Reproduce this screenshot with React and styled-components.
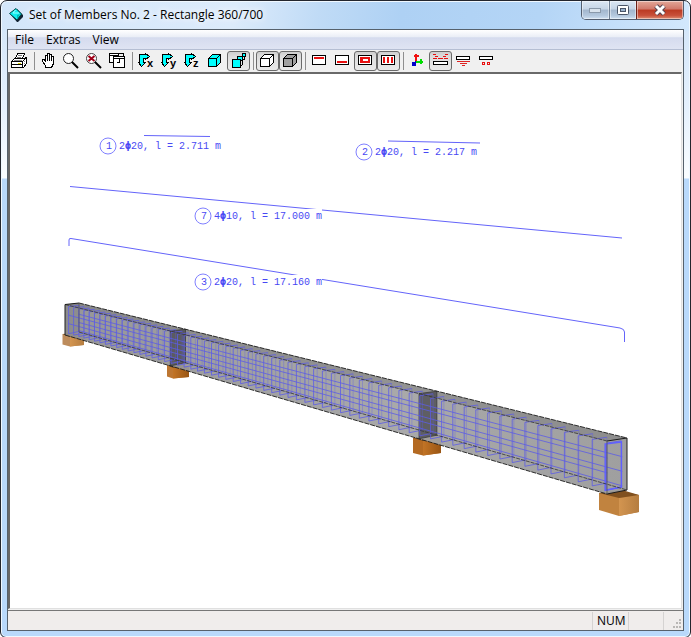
import React from 'react'
import styled, { createGlobalStyle } from 'styled-components'

const GlobalStyle = createGlobalStyle`
* { box-sizing: border-box; }
body {
  margin: 0;
  background: #fff;
}
button { font: inherit; color: inherit; }
`

const Window = styled.div`
  min-height: 100vh;
  display: flex;
  flex-direction: column;
  padding: 0 6px 6px;
  border: 1px solid #23262e;
  border-radius: 7px 7px 6px 6px;
  box-shadow: inset 0 0 0 1px #f0f8ff;
  background:
    linear-gradient(100deg, #d3e6fa 0, #dcebfb 34%, #c0dbf6 46%, #aed1f4 58%, #b4d5f6 78%, #d3e8fc 100%) 0 0 / 100% 30px no-repeat,
    linear-gradient(#cfe3f8 0, #e6f1fd 110px, #fafdff 177px, #b9d9fb 178px, #b9d9fb 100%);
  font-family: "Open Sans", "Noto Sans", sans-serif;
  font-size: 12px;
  color: #000;
`
const TitleBar = styled.header`
  height: 28px;
  display: flex;
  align-items: center;
  gap: 6px;
  padding-left: 2px;
`
const Title = styled.h1`
  flex: 1;
  margin: 0;
  font-size: 12px;
  line-height: 16px;
  font-weight: 400;
  white-space: nowrap;
  text-shadow: 0 0 6px #fff, 0 0 10px #fff;
`
const Caption = styled.div`
  align-self: flex-start;
  display: flex;
  height: 19px;
  border: 1px solid #535e6f;
  border-top: 0;
  border-radius: 0 0 5px 5px;
  overflow: hidden;
`
const CaptionButton = styled.button`
  width: ${(p) => (p.$close ? 47 : 27)}px;
  padding: 0;
  border: 0;
  border-left: ${(p) => (p.$first ? '0' : p.$close ? '1px solid #6b2018' : '1px solid #6f7f93')};
  display: flex;
  align-items: center;
  justify-content: center;
  box-shadow: inset 0 0 0 1px rgba(255, 255, 255, 0.45);
  background: ${(p) =>
    p.$close
      ? 'linear-gradient(#e3a899 0, #d1786a 45%, #bb3a22 50%, #c8503a 80%, #df8f74 100%)'
      : 'linear-gradient(#dbe7f4 0, #c6d5e6 45%, #a2b6cd 50%, #b3c7dd 80%, #cfe0f2 100%)'};
`
const Client = styled.div`
  flex: 1;
  display: flex;
  flex-direction: column;
  border: 1px solid #56616c;
  background: #f0f0f0;
`
const MenuBar = styled.nav`
  height: 20px;
  flex: none;
  display: flex;
  align-items: center;
  padding-left: 1px;
  border-bottom: 1px solid #b5bed3;
  background: linear-gradient(#fff 0, #e9edf6 38%, #d5dbee 40%, #dfe4f3 100%);
`
const MenuItem = styled.button`
  padding: 0 6px;
  border: 0;
  background: none;
  line-height: 18px;
`
const ToolBar = styled.div`
  height: 22px;
  flex: none;
  display: flex;
  align-items: center;
  padding-bottom: 1px;
  background: #f0f0f0;
`
const ToolButton = styled.button`
  width: 23px;
  height: 20px;
  flex: none;
  padding: 0;
  border: 1px solid ${(p) => (p.$pressed ? '#6a6a6a' : 'transparent')};
  border-radius: 3px;
  background: ${(p) => (p.$pressed ? 'linear-gradient(#cfcfcf 0, #dedede 30%, #e9e9e9 100%)' : 'none')};
  svg { display: block; }
`
const Separator = styled.span`
  width: 6px;
  height: 18px;
  flex: none;
  display: flex;
  justify-content: center;
  &::before {
    content: '';
    width: 1px;
    background: #8e8e8e;
  }
`
const Canvas = styled.main`
  flex: 1;
  display: flex;
  border-style: solid;
  border-width: 2px 1px 1px 2px;
  border-color: #696969 #e0e0e0 #e0e0e0 #696969;
  margin-right: 1px;
  background: #fff;
`
const Drawing = styled.svg`
  flex: 1;
  width: 100%;
  min-width: 0;
  font-family: "Liberation Mono", "DejaVu Sans Mono", monospace;
  font-size: 10px;
`
const StatusBar = styled.footer`
  height: 20px;
  flex: none;
  display: flex;
  margin-top: 1px;
  border-top: 1px solid #777;
  background: #f0edec;
  padding-top: 1px;
`
const Field = styled.span`
  width: ${(p) => p.$width}px;
  padding-left: 4px;
  border-left: 1px solid #d5d3d2;
  line-height: 17px;
`
const Hint = styled.span`
  flex: 1;
`
const Grip = styled.svg`
  align-self: flex-end;
  flex: none;
`

function Icon({ children }) {
  return (
    <svg width="21" height="18" viewBox="0 0 21 18" shapeRendering="crispEdges" aria-hidden="true">
      {children}
    </svg>
  )
}

const AxisView = ({ axis }) => (
  <Icon>
    <path d="M3.500 2.500h6v-1l4 3-4 3v-1h-2v4h2l-4 4-3-4h1z" fill="#0ff" stroke="#000" />
    <text x="11" y="15" fontFamily="Liberation Sans, sans-serif" fontSize="11" fontWeight="700">{axis}</text>
  </Icon>
)

const Cube = ({ fill, edge = 12 }) => (
  <Icon>
    <path d={`M3.500 6.500l4-4h${edge - 4}v8l-4 4h-${edge - 4}z`} fill={fill} stroke="#000" />
    <path d={`M3.500 6.500h${edge - 4}v8M${edge - 0.5} 6.500l4-4`} fill="none" stroke="#000" />
  </Icon>
)

const Frame = ({ children }) => (
  <Icon>
    <rect x="3.500" y="3.500" width="13" height="9" fill="#fff" stroke="#000" />
    {children}
  </Icon>
)

const icons = {
  print: (
    <Icon>
      <path d="M6.500 6.500l2-5h7l-2 5z" fill="#fff" stroke="#000" />
      <path d="M9 3.500h4M8 5.500h4" stroke="#777" />
      <path d="M2.500 9.500l3-3h9l3-1v6l-3 4h-12z" fill="#fff" stroke="#000" />
      <path d="M2.500 9.500h11l4-4M13.500 9.500v5M2 12.500h12" fill="none" stroke="#000" />
      <path d="M9 11h3" stroke="#e0d800" strokeWidth="1" />
      <path d="M15 9.500h1M15 11.500h1M5 8.500h8" stroke="#888" />
    </Icon>
  ),
  pan: (
    <Icon>
      <path d="M7.500 15.500v-2l-3-4v-2h2l1 2v-6h2v-2h2v1h2v2h2v7l-2 4z" fill="#fff" stroke="#000" />
      <path d="M9.500 3v6M11.500 3v6M13.500 4v5" stroke="#000" />
    </Icon>
  ),
  zoom: (
    <Icon>
      <g shapeRendering="auto">
        <circle cx="7.500" cy="6.500" r="5" fill="#fff" stroke="#222" />
        <path d="M11 10l6 6" stroke="#000" strokeWidth="2" />
      </g>
    </Icon>
  ),
  zoomOff: (
    <Icon>
      <g shapeRendering="auto">
        <circle cx="7.500" cy="6.500" r="5" fill="#fff" stroke="#444" />
        <path d="M11 10l6 6" stroke="#000" strokeWidth="2" />
        <path d="M4.500 4l6 5M10.500 4l-6 5" stroke="#a00018" strokeWidth="2" />
      </g>
    </Icon>
  ),
  windows: (
    <Icon>
      <rect x="2.500" y="1.500" width="9" height="9" fill="#fff" stroke="#000" />
      <rect x="6.500" y="4.500" width="11" height="11" fill="#fff" stroke="#000" />
      <path d="M2 3.500h9M6 6.500h11M11.500 1.500h5v3M9.500 10.500h3v-4" fill="none" stroke="#000" />
    </Icon>
  ),
  x: <AxisView axis="x" />,
  y: <AxisView axis="y" />,
  z: <AxisView axis="z" />,
  iso: <Cube fill="#0ff" />,
  members: (
    <Icon>
      <rect x="14.500" y="1.500" width="3" height="3" fill="#0ff" stroke="#000" />
      <path d="M9.500 7v-2.500h5v4h-2" fill="#0ff" stroke="#000" />
      <path d="M14 7.500h2v-3" fill="none" stroke="#000" />
      <path d="M4.500 7.500h8v8h-8z" fill="#0ff" stroke="#000" />
      <path d="M12.500 15l2-3v-4" fill="none" stroke="#000" />
    </Icon>
  ),
  wire: <Cube fill="#fff" edge={13} />,
  solid: <Cube fill="#a0a0a0" edge={13} />,
  top: <Frame><path d="M5 6h10" stroke="#e81010" strokeWidth="2" /></Frame>,
  bottom: <Frame><path d="M5 10h10" stroke="#e81010" strokeWidth="2" /></Frame>,
  link: <Frame><path d="M5 5h10v6H5zM8 7v2h5V7z" fill="#e81010" fillRule="evenodd" /></Frame>,
  bars: <Frame><path d="M6 5v6M10 5v6M14 5v6" stroke="#e81010" strokeWidth="2" /></Frame>,
  axes: (
    <Icon>
      <path d="M9 2v8M7 4h5" stroke="#f01010" strokeWidth="2" />
      <path d="M9 9.500h7M14 7v5" stroke="#0d0" strokeWidth="2" />
      <path d="M8.500 9v2h-2M5 10h3v3h-3z" stroke="#00c" fill="#00c" />
    </Icon>
  ),
  loadTop: (
    <Icon>
      <rect x="3.500" y="9.500" width="14" height="3" fill="#fff" stroke="#000" />
      <path d="M3 2.500h3M15 2.500h3M5 4.500h3M13 4.500h3M3 6.500h4M8 6.500h5M14 6.500h4" stroke="#e81010" />
    </Icon>
  ),
  loadBottom: (
    <Icon>
      <rect x="3.500" y="4.500" width="13" height="3" fill="#fff" stroke="#000" />
      <path d="M4 9.500h13M7 11.500h7M9 13.500h3" stroke="#d22" />
    </Icon>
  ),
  dimensions: (
    <Icon>
      <rect x="3.500" y="4.500" width="13" height="3" fill="#fff" stroke="#000" />
      <rect x="6.500" y="10.500" width="2" height="2" fill="none" stroke="#e81010" />
      <rect x="11.500" y="10.500" width="2" height="2" fill="none" stroke="#e81010" />
    </Icon>
  ),
}

// null is a separator
const tools = [
  ['print', 'Print'],
  null,
  ['pan', 'Pan'], ['zoom', 'Zoom'], ['zoomOff', 'Reset zoom'], ['windows', 'Windows'],
  null,
  ['x', 'View in X'], ['y', 'View in Y'], ['z', 'View in Z'], ['iso', 'Isometric view'], ['members', 'Perspective', true],
  null,
  ['wire', 'Wireframe', true], ['solid', 'Solid', true],
  null,
  ['top', 'Top reinforcement'], ['bottom', 'Bottom reinforcement'], ['link', 'Stirrups', true], ['bars', 'All bars', true],
  null,
  ['axes', 'Axes'], ['loadTop', 'Labels', true], ['loadBottom', 'Supports'], ['dimensions', 'Sections'],
]

// Beam in perspective: t runs along the length, u from front to back, v from top to bottom
const RATIO = 1.71
const LINKS = 63

function project(t, u, v) {
  const s = t / (RATIO - (RATIO - 1) * t)
  const x = 65 + 542 * s + u * (14 + 6 * s)
  const top = 304.5 + 136.5 * s - u * (1.5 + 1.5 * s)
  const bottom = 335 + 159 * s - u * (3 + s)
  return [x, top + (bottom - top) * v]
}

function poly(...points) {
  return 'M' + points.map(([t, u, v]) => project(t, u, v).map((n) => n.toFixed(1)).join(' ')).join('L')
}

const face = (t) => poly([t, 0, 0], [t, 1, 0], [t, 1, 1], [t, 0, 1]) + 'z'
const rebar = (u, v) => poly([0.004, u, v], [0.998, u, v])

function Support({ points, ridge, top, light, dark }) {
  return (
    <g>
      <polygon points={points} fill={light} />
      <polygon points={ridge} fill={dark} />
      <polygon points={top} fill="#80501f" />
    </g>
  )
}

function Beam() {
  const links = Array.from({ length: LINKS + 1 }, (_, i) => 0.006 + (0.991 * i) / LINKS)
  return (
    <g>
      <path d={poly([0, 0, 0], [0, 1, 0], [1, 1, 0], [1, 1, 1], [1, 0, 1], [0, 0, 1]) + 'z'} fill="url(#side)" fillOpacity="0.94" />
      <path d={poly([0, 0, 0], [0, 1, 0], [1, 1, 0], [1, 0, 0]) + 'z'} fill="#777" fillOpacity="0.45" />
      <path d={face(0)} fill="#555" fillOpacity="0.15" />
      <path d={face(0.292)} fill="#45454c" fillOpacity="0.75" stroke="#333" strokeWidth="0.7" />
      <path d={face(0.763)} fill="#45454c" fillOpacity="0.75" stroke="#333" strokeWidth="0.7" />
      <g fill="none" stroke="#5c5ce6" strokeWidth="0.8">
        {links.map((t) => (
          <path key={t} d={poly([t, 0.86, 0.95], [t, 0.12, 0.95], [t, 0.12, 0.06], [t, 0.86, 0.06])} />
        ))}
        <g strokeOpacity="0.45">
          {links.map((t) => (
            <path key={t} d={poly([t, 0.86, 0.06], [t, 0.86, 0.95])} />
          ))}
        </g>
        <path d={[rebar(0.12, 0.34), rebar(0.12, 0.62), rebar(0.86, 0.36), rebar(0.86, 0.64), rebar(0.86, 0.92)].join('')} />
      </g>
      <path d={poly([0.997, 0.05, 0.07], [0.997, 0.86, 0.08], [0.997, 0.86, 0.95], [0.997, 0.05, 0.95]) + 'z'} fill="none" stroke="#6060ff" strokeWidth="1.500" />
      <path
        d={poly([0, 0, 0], [1, 0, 0]) + poly([0, 1, 1], [1, 1, 1])}
        fill="none" stroke="#333" strokeWidth="0.8" strokeDasharray="4 1"
      />
      <path
        d={poly([0, 1, 0], [1, 1, 0]) + poly([0, 0, 1], [1, 0, 1])}
        fill="none" stroke="#1c1c1c" strokeWidth="0.9" strokeDasharray="5 1"
      />
      <path d={poly([0, 0, 1], [0, 0, 0], [0, 1, 0]) + poly([1, 0, 0], [1, 1, 0], [1, 1, 1], [1, 0, 1])} fill="none" stroke="#1c1c1c" />
      <path d={poly([0, 1, 0], [0, 1, 1]) + poly([1, 0, 0], [1, 0, 1])} stroke="#555" strokeWidth="0.8" />
    </g>
  )
}

const labels = [
  { no: 1, x: 108, y: 146, bars: '2', text: '20, l = 2.711 m' },
  { no: 2, x: 364, y: 152, bars: '2', text: '20, l = 2.217 m' },
  { no: 7, x: 203, y: 216, bars: '4', text: '10, l = 17.000 m' },
  { no: 3, x: 203, y: 282, bars: '2', text: '20, l = 17.160 m' },
]

function BarLabel({ no, x, y, bars, text }) {
  return (
    <g>
      <rect x={x - 9} y={y - 7} width={text.length * 6 + 32} height="14" fill="#fff" />
      <circle cx={x} cy={y} r="8" fill="#fff" stroke="#8080ff" />
      <g fill="#4848f4">
        <text x={x - 2} y={y + 3}>{no}</text>
        <text x={x + 11} y={y + 3}>
          {bars}<tspan fontFamily="DejaVu Sans Mono, monospace" fontWeight="700">ϕ</tspan>{text}
        </text>
      </g>
    </g>
  )
}

function Model() {
  return (
    <Drawing viewBox="10 74 671 534" role="img" aria-label="Reinforcement model">
      <defs>
        <linearGradient id="side" x1="0" y1="0" x2="1" y2="0">
          <stop offset="0" stopColor="#909090" />
          <stop offset="0.6" stopColor="#a4a4a4" />
          <stop offset="1" stopColor="#999" />
        </linearGradient>
        <linearGradient id="wood" x1="0" y1="0" x2="1" y2="0">
          <stop offset="0" stopColor="#c27426" />
          <stop offset="1" stopColor="#995513" />
        </linearGradient>
        <linearGradient id="woodLight" x1="0" y1="0" x2="1" y2="0">
          <stop offset="0" stopColor="#d39550" />
          <stop offset="1" stopColor="#b57d40" />
        </linearGradient>
      </defs>
      <g fill="none" stroke="#6464fa">
        <path d="M144 135.500L210 136.500M388 141L480 143M70 186.500L622 238" />
        <path d="M69 246V240Q69 238 71 238.500L620 328Q624.500 329 624.500 332V342" />
      </g>
      {labels.map((label) => <BarLabel key={label.no} {...label} />)}
      <Support points="62.500,334 84,335 84,345 70,346.500 62.500,344.500" ridge="70,337 84,335 84,345 70,346.500" top="62.500,334 75,333 84,335 70,337" light="#bd8c5c" dark="url(#woodLight)" />
      <Support points="167,365 189,367 189,377 173,378.500 167,376.500" ridge="173,368 189,367 189,377 173,378.500" top="167,365 180,364 189,367 173,368" light="#bd7631" dark="url(#wood)" />
      <Support points="413,438 441,437 441,453 423,455.500 413,453" ridge="423,441 441,437 441,453 423,455.500" top="413,438 431,435 441,437 423,441" light="#b46a22" dark="url(#wood)" />
      <Support points="599,493 620,491 639,495 639,512 619,516 599,510" ridge="619,498 639,495 639,512 619,516" top="599,493 622,490 639,495 619,498" light="#c1833f" dark="url(#woodLight)" />
      <Beam />
    </Drawing>
  )
}

function App() {
  return (
    <>
      <GlobalStyle />
      <Window>
        <TitleBar>
          <svg width="14" height="16" viewBox="0 0 14 16" aria-hidden="true">
            <path d="M8 2L14 8v2L9 15H8L2 8z" fill="#123" />
            <path d="M7 1.500L12.500 7 8 13 0.500 6.500z" fill="#1ee" stroke="#044" />
            <path d="M6.500 3L4 6h6" fill="none" stroke="#9ff" />
            <path d="M8 12V8l3-1z" fill="#0bb" />
          </svg>
          <Title>Set of Members No. 2 - Rectangle 360/700</Title>
          <Caption>
            <CaptionButton $first aria-label="Minimize">
              <svg width="13" height="6"><rect x="0.500" y="1.500" width="11" height="4" fill="#d9e3ed" stroke="#8a99aa" /></svg>
            </CaptionButton>
            <CaptionButton aria-label="Maximize">
              <svg width="12" height="10">
                <rect x="0.500" y="0.500" width="11" height="9" rx="1" fill="#fff" stroke="#4a5568" />
                <rect x="3.500" y="3.500" width="5" height="3" fill="#9bb2cd" stroke="#4a5568" />
              </svg>
            </CaptionButton>
            <CaptionButton $close aria-label="Close">
              <svg width="14" height="12">
                <path d="M3 2l8 8M11 2l-8 8" stroke="#564450" strokeWidth="5" />
                <path d="M3 2l8 8M11 2l-8 8" stroke="#fff" strokeWidth="3" />
              </svg>
            </CaptionButton>
          </Caption>
        </TitleBar>
        <Client>
          <MenuBar>
            <MenuItem>File</MenuItem>
            <MenuItem>Extras</MenuItem>
            <MenuItem>View</MenuItem>
          </MenuBar>
          <ToolBar role="toolbar">
            {tools.map((tool, i) =>
              tool ? (
                <ToolButton key={i} $pressed={tool[2]} aria-label={tool[1]} aria-pressed={Boolean(tool[2])}>
                  {icons[tool[0]]}
                </ToolButton>
              ) : (
                <Separator key={i} />
              )
            )}
          </ToolBar>
          <Canvas>
            <Model />
          </Canvas>
          <StatusBar>
            <Hint />
            <Field $width={36}>NUM</Field>
            <Field $width={35} />
            <Field $width={9} />
            <Grip width="11" height="11" viewBox="0 0 11 11" aria-hidden="true">
              <path d="M7 0h2v2h-2zM4 3h2v2h-2zM7 3h2v2h-2zM1 7h2v2h-2zM4 7h2v2h-2zM7 7h2v2h-2z" fill="#b9b7b5" />
            </Grip>
          </StatusBar>
        </Client>
      </Window>
    </>
  )
}

export default App
